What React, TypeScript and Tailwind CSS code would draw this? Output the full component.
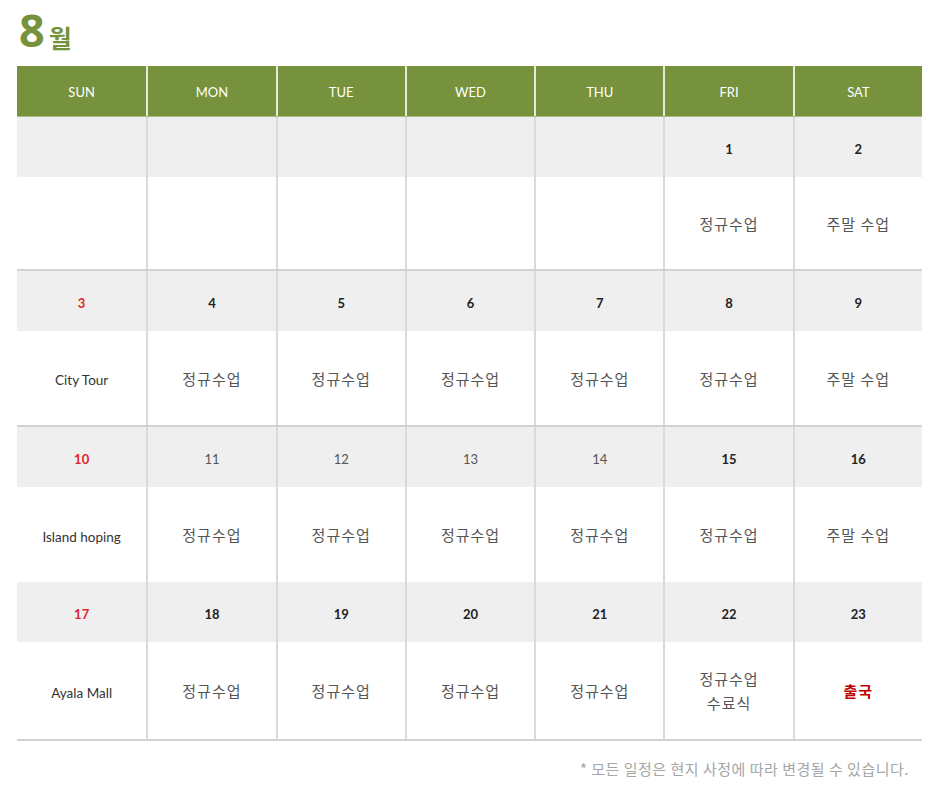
import React from "react";

type Cell = { d?: string; dc?: "red" | "dark" | "light"; t?: React.ReactNode; kind?: "en" | "ko" | "red" };

const F_LAT = { fontFamily: "Lato, 'Open Sans', 'Noto Sans CJK KR', sans-serif" };
const F_KO = { fontFamily: "'Noto Sans CJK KR', 'Noto Sans', sans-serif" };

const weeks: { cells: Cell[]; h: string; line: boolean }[] = [
  {
    h: "h-[92px]",
    line: true,
    cells: [
      {}, {}, {}, {}, {},
      { d: "1", dc: "dark", t: "정규수업", kind: "ko" },
      { d: "2", dc: "dark", t: "주말 수업", kind: "ko" },
    ],
  },
  {
    h: "h-[94px]",
    line: true,
    cells: [
      { d: "3", dc: "red", t: "City Tour", kind: "en" },
      { d: "4", dc: "dark", t: "정규수업", kind: "ko" },
      { d: "5", dc: "dark", t: "정규수업", kind: "ko" },
      { d: "6", dc: "dark", t: "정규수업", kind: "ko" },
      { d: "7", dc: "dark", t: "정규수업", kind: "ko" },
      { d: "8", dc: "dark", t: "정규수업", kind: "ko" },
      { d: "9", dc: "dark", t: "주말 수업", kind: "ko" },
    ],
  },
  {
    h: "h-[95px]",
    line: false,
    cells: [
      { d: "10", dc: "red", t: "Island hoping", kind: "en" },
      { d: "11", dc: "light", t: "정규수업", kind: "ko" },
      { d: "12", dc: "light", t: "정규수업", kind: "ko" },
      { d: "13", dc: "light", t: "정규수업", kind: "ko" },
      { d: "14", dc: "light", t: "정규수업", kind: "ko" },
      { d: "15", dc: "dark", t: "정규수업", kind: "ko" },
      { d: "16", dc: "dark", t: "주말 수업", kind: "ko" },
    ],
  },
  {
    h: "h-[97px]",
    line: true,
    cells: [
      { d: "17", dc: "red", t: "Ayala Mall", kind: "en" },
      { d: "18", dc: "dark", t: "정규수업", kind: "ko" },
      { d: "19", dc: "dark", t: "정규수업", kind: "ko" },
      { d: "20", dc: "dark", t: "정규수업", kind: "ko" },
      { d: "21", dc: "dark", t: "정규수업", kind: "ko" },
      {
        d: "22",
        dc: "dark",
        t: (
          <>
            <span>정규수업</span>
            <span>수료식</span>
          </>
        ),
        kind: "ko",
      },
      { d: "23", dc: "dark", t: "출국", kind: "red" },
    ],
  },
];

const days = ["SUN", "MON", "TUE", "WED", "THU", "FRI", "SAT"];

function dateClass(dc?: string) {
  if (dc === "red") return "text-[#e0262b] font-bold";
  if (dc === "light") return "text-[#555555] font-normal";
  return "text-[#222222] font-bold";
}

export default function App() {
  return (
    <div className="w-[936px] h-[791px] bg-white relative overflow-hidden">
      <div className="pl-[19px] pt-[2px] h-[66px] flex items-start">
        <div className="flex items-end text-[#76923c]">
          <span
            className="text-[45px] leading-[56px] font-bold"
            style={{ fontFamily: "'Noto Sans', 'Open Sans', sans-serif" }}
          >
            8
          </span>
          <span className="text-[25px] leading-[25px] font-bold ml-[4px] mb-[8px]" style={F_KO}>
            월
          </span>
        </div>
      </div>
      <div className="ml-[17px] w-[905px]">
        <div className="grid grid-cols-7 h-[51px] bg-[#76923c] border-b border-[#a8bd80]">
          {days.map((d, i) => (
            <div
              key={d}
              className={`flex items-center justify-center pt-[4px] text-white text-[13px] ${i > 0 ? "border-l-2 border-[#e4ead8]" : ""}`}
              style={F_LAT}
            >
              {d}
            </div>
          ))}
        </div>
        {weeks.map((w, wi) => (
          <div key={wi} className={w.line ? "border-b-2 border-[#d2d2d2]" : ""}>
            <div className="grid grid-cols-7 h-[60px] bg-[#efefef]">
              {w.cells.map((c, i) => (
                <div
                  key={i}
                  className={`flex items-center justify-center pt-[5px] text-[13px] ${i > 0 ? "border-l-2 border-[#dadada]" : ""} ${dateClass(c.dc)}`}
                  style={F_LAT}
                >
                  {c.d}
                </div>
              ))}
            </div>
            <div className={`grid grid-cols-7 ${w.h} bg-white`}>
              {w.cells.map((c, i) => (
                <div
                  key={i}
                  className={`flex flex-col items-center justify-center ${i > 0 ? "border-l-2 border-[#dadada]" : ""} ${
                    c.kind === "en"
                      ? "text-[13.5px] text-[#333333] pt-[5px]"
                      : c.kind === "red"
                      ? "text-[15px] font-bold text-[#c00000] tracking-[1px] pt-[2px]"
                      : "text-[15px] text-[#555555] tracking-[1px] leading-[24px] pt-[1px]"
                  }`}
                  style={c.kind === "en" ? F_LAT : F_KO}
                >
                  {c.t}
                </div>
              ))}
            </div>
          </div>
        ))}
      </div>
      <div className="w-[909px] mt-[17px] text-right text-[15px] text-[#a6a6a6] tracking-[0.5px]" style={F_KO}>
        * 모든 일정은 현지 사정에 따라 변경될 수 있습니다.
      </div>
    </div>
  );
}
